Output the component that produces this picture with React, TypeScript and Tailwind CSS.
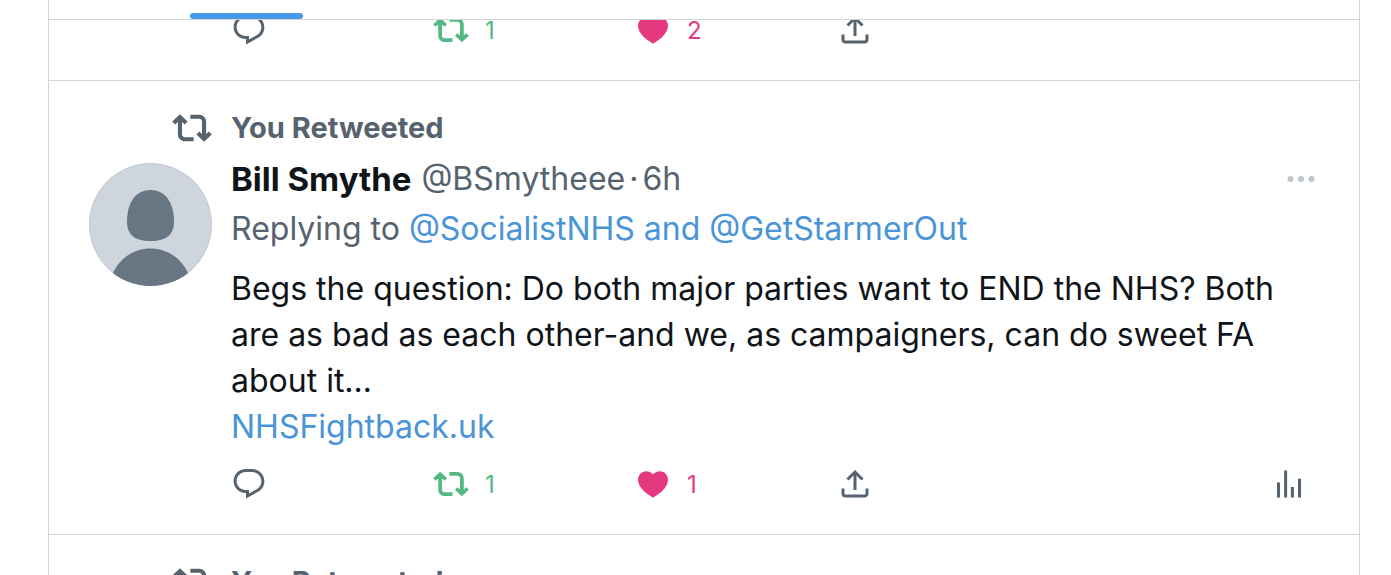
import React from 'react';

interface IconProps {
  className?: string;
}

interface ActionProps {
  label: string;
  count?: number;
  className?: string;
  children: React.ReactNode;
}

interface TweetActionsProps {
  retweets: number;
  likes: number;
  showAnalytics?: boolean;
}

function ReplyIcon({ className }: IconProps) {
  return (
    <svg viewBox="0 0 24 24" fill="currentColor" className={className} aria-hidden="true">
      <path d="M1.751 10c0-4.42 3.584-8 8.005-8h4.366c4.49 0 8.129 3.64 8.129 8.13 0 2.96-1.607 5.68-4.196 7.11l-8.054 4.46v-3.69h-.067c-4.49.1-8.183-3.51-8.183-8.01zm8.005-6c-3.317 0-6.005 2.69-6.005 6 0 3.37 2.77 6.08 6.138 6.01l.351-.01h1.761v2.3l5.087-2.81c1.951-1.08 3.163-3.13 3.163-5.36 0-3.39-2.744-6.13-6.129-6.13H9.756z" />
    </svg>
  );
}

function RetweetIcon({ className }: IconProps) {
  return (
    <svg viewBox="0 0 24 24" fill="currentColor" className={className} aria-hidden="true">
      <path d="M4.75 3.79l4.603 4.3-1.706 1.82L6 8.38v7.37c0 .97.784 1.75 1.75 1.75H13V20H7.75c-2.347 0-4.25-1.9-4.25-4.25V8.38L1.853 9.91.147 8.09l4.603-4.3zm11.5 2.71H11V4h5.25c2.347 0 4.25 1.9 4.25 4.25v7.37l1.647-1.53 1.706 1.82-4.603 4.3-4.603-4.3 1.706-1.82L18 15.62V8.25c0-.97-.784-1.75-1.75-1.75z" />
    </svg>
  );
}

function HeartIcon({ className }: IconProps) {
  return (
    <svg viewBox="0 0 24 24" fill="currentColor" className={className} aria-hidden="true">
      <path d="M20.884 13.19c-1.351 2.48-4.001 5.12-8.379 7.67l-.503.3-.504-.3c-4.379-2.55-7.029-5.19-8.382-7.67-1.36-2.5-1.41-4.86-.514-6.67.887-1.79 2.647-2.91 4.601-3.01 1.651-.09 3.368.56 4.798 2.01 1.429-1.45 3.146-2.1 4.796-2.01 1.954.1 3.714 1.22 4.601 3.01.896 1.81.846 4.17-.514 6.67z" />
    </svg>
  );
}

function ShareIcon({ className }: IconProps) {
  return (
    <svg viewBox="0 0 24 24" fill="currentColor" className={className} aria-hidden="true">
      <path d="M12 2.59l5.7 5.7-1.41 1.42L13 6.41V16h-2V6.41l-3.3 3.3-1.41-1.42L12 2.59zM21 15l-.02 3.51c0 1.38-1.12 2.49-2.5 2.49H5.5C4.11 21 3 19.88 3 18.5V15h2v3.5c0 .28.22.5.5.5h12.98c.28 0 .5-.22.5-.5L19 15h2z" />
    </svg>
  );
}

function AnalyticsIcon({ className }: IconProps) {
  return (
    <svg viewBox="0 0 24 24" fill="currentColor" className={className} aria-hidden="true">
      <path d="M8.75 21V3h2v18h-2zM18 21V8.5h2V21h-2zM4 21l.004-10h2L6 21H4zm9.248 0v-7h2v7h-2z" />
    </svg>
  );
}

function MoreIcon({ className }: IconProps) {
  return (
    <svg viewBox="0 0 24 24" fill="currentColor" className={className} aria-hidden="true">
      <circle cx="5" cy="12" r="2" />
      <circle cx="12" cy="12" r="2" />
      <circle cx="19" cy="12" r="2" />
    </svg>
  );
}

function Avatar() {
  return (
    <svg viewBox="0 0 123 123" className="w-full rounded-full" role="img" aria-label="Bill Smythe">
      <rect width="123" height="123" fill="#ced5dd" />
      <circle cx="61.5" cy="61.5" r="61" fill="none" stroke="#c3cad1" />
      <path
        d="M61.5 27C76 27 85 39 85 59C85 71 78 78 61.5 78C45 78 38 71 38 59C38 39 47 27 61.5 27Z"
        fill="#687683"
      />
      <path d="M20 123C24 100 41 85.500 61.500 85.500C82 85.500 99 100 103 123Z" fill="#687683" />
    </svg>
  );
}

function Action({ label, count, className = 'text-[#56636f]', children }: ActionProps) {
  return (
    <div className="w-full max-w-[202px]">
      <button className={`flex items-center gap-4 text-2xl leading-9 ${className}`} aria-label={label}>
        {children}
        {count !== undefined && <span className="pt-0.5">{count}</span>}
      </button>
    </div>
  );
}

function TweetActions({ retweets, likes, showAnalytics }: TweetActionsProps) {
  return (
    <div className="flex items-center h-9">
      <Action label="Reply">
        <ReplyIcon className="w-9 h-9" />
      </Action>
      <Action label="Undo Retweet" count={retweets} className="text-[#54b884]">
        <RetweetIcon className="w-9 h-9" />
      </Action>
      <Action label="Unlike" count={likes} className="text-[#e4387f]">
        <HeartIcon className="w-9 h-9" />
      </Action>
      <Action label="Share">
        <ShareIcon className="w-9 h-9" />
      </Action>
      {showAnalytics && (
        <button className="ml-auto mr-2 text-[#56636f]" aria-label="View Tweet analytics">
          <AnalyticsIcon className="w-9 h-9" />
        </button>
      )}
    </div>
  );
}

function RetweetedBy() {
  return (
    <div className="flex items-center gap-[19px] pl-[83px] text-[29px] leading-10 font-bold text-[#56636f]">
      <RetweetIcon className="w-10 h-10 shrink-0" />
      <span>You Retweeted</span>
    </div>
  );
}

export default function App() {
  return (
    <div className="h-screen overflow-hidden bg-white font-['Inter',sans-serif]">
      <main className="ml-12 mr-[31px] min-h-screen border-x border-[#d0d5d9]">
        <header className="relative z-10 h-5 bg-white border-b border-[#cfd6da] pl-[141px] pt-[13px]">
          <div className="w-[113px] h-1.5 rounded-full bg-[#4a99e9]" />
        </header>

        <article className="-mt-2 pl-[182px] pr-11 pb-8 border-b border-[#d0d5d9]">
          <TweetActions retweets={1} likes={2} />
        </article>

        <article className="pl-10 pr-11 pt-[27px] pb-8 border-b border-[#d0d5d9]">
          <RetweetedBy />
          <div className="flex gap-[19px] pt-1.5">
            <div className="w-[123px] shrink-0 pt-[9px]">
              <Avatar />
            </div>
            <div className="grow min-w-0 text-[32px] text-[#0f1419]">
              <div className="flex items-center leading-[50px] text-[#56636f]">
                <span className="mr-2.5 text-[33px] font-bold text-[#0f1419]">Bill Smythe</span>
                <span>@BSmytheee</span>
                <span className="mx-1">·</span>
                <span>6h</span>
                <button className="ml-auto -mr-1 text-[#bdc6cd]" aria-label="More">
                  <MoreIcon className="w-9 h-9" />
                </button>
              </div>
              <p className="leading-[50px] text-[#56636f]">
                Replying to{' '}
                <a href="#" className="text-[#4a94d8]">
                  @SocialistNHS and @GetStarmerOut
                </a>
              </p>
              <div className="pt-3 pb-4 leading-[46px]">
                <p>
                  Begs the question: Do both major parties want to END the NHS? Both are as bad as each
                  other-and we, as campaigners, can do sweet FA about it…
                </p>
                <a href="#" className="block w-fit text-[#4a94d8]">
                  NHSFightback.uk
                </a>
              </div>
              <TweetActions retweets={1} likes={1} showAnalytics />
            </div>
          </div>
        </article>

        <article className="pl-10 pr-11 pt-[27px]">
          <RetweetedBy />
        </article>
      </main>
    </div>
  );
}
